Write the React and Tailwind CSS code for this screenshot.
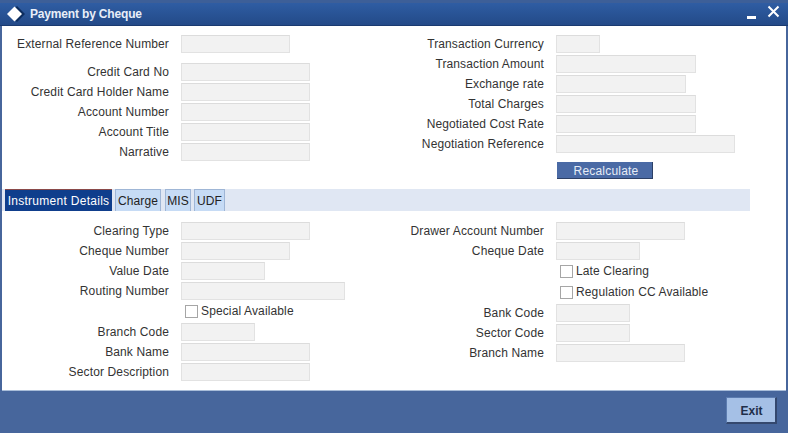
const font = { fontFamily: '"Liberation Sans", Arial, sans-serif' };

function Field({ label, w, className = "" }) {
  return (
    <div className={`flex items-center h-5 ${className}`}>
      <label className="w-[167px] text-right text-[12px] tracking-[0.13px] text-[#333333] whitespace-nowrap">{label}</label>
      <div className={`ml-3 h-[18px] bg-[#f2f2f2] border border-[#e2e2e2] border-t-[#dcdcdc] ${w}`} />
    </div>
  );
}

function Check({ label, className = "" }) {
  return (
    <div className={`flex items-center h-5 ${className}`}>
      <div className="w-[13px] h-[13px] bg-white border border-[#a6a6a6]" />
      <span className="ml-[3px] text-[12px] tracking-[0.13px] text-[#333333] whitespace-nowrap">{label}</span>
    </div>
  );
}

function Tab({ label, active, className = "" }) {
  return (
    <div
      className={
        active
          ? `h-[22px] flex items-center justify-center text-[12px] tracking-[0.28px] text-white bg-[#0f3e8c] border-t border-t-[#8a4a4a] ${className}`
          : `h-[22px] flex items-center justify-center text-[12px] tracking-[0.1px] text-[#222222] bg-[#c6dbf5] border border-[#9fb6d6] border-b-0 ${className}`
      }
    >
      {label}
    </div>
  );
}

export default function App() {
  return (
    <div style={font} className="w-[788px] h-[433px] flex flex-col bg-[#47669c] overflow-hidden">
      {/* title bar */}
      <div className="h-[26px] shrink-0 flex items-center border-t-[3px] border-t-[#3d5f98] border-b border-b-[#1a3a70] bg-gradient-to-b from-[#2f5da3] to-[#234a88] pl-[7px] pr-[2px]">
        <svg width="18" height="16" viewBox="0 0 18 16" className="shrink-0">
          <path d="M10 0 L18 8 L10 16 L2 8 Z" fill="#0d2d5e" />
          <path d="M7.5 0.5 L15 8 L7.5 15.5 L0 8 Z" fill="#ffffff" />
        </svg>
        <span className="ml-[5px] text-[12px] font-bold tracking-[-0.17px] text-[#e8eef8]">Payment by Cheque</span>
        <div className="ml-auto flex items-center mr-[6px]">
          <div className="w-[9px] h-[3px] bg-white mt-[6px]" />
          <svg width="13" height="13" viewBox="0 0 13 13" className="ml-[11px] mb-[6px]">
            <path d="M1.5 1.5 L11.5 11.5 M11.5 1.5 L1.5 11.5" stroke="#ffffff" strokeWidth="2" />
          </svg>
        </div>
      </div>

      {/* body */}
      <div className="ml-[2px] mr-[2px] h-[365px] shrink-0 bg-white border-b border-b-[#a9bdd9]">
        <div className="flex pt-2 h-[163px]">
          <div className="w-[375px]">
            <Field label="External Reference Number" w="w-[109px]" />
            <Field label="Credit Card No" w="w-[129px]" className="mt-2" />
            <Field label="Credit Card Holder Name" w="w-[129px]" />
            <Field label="Account Number" w="w-[129px]" />
            <Field label="Account Title" w="w-[129px]" />
            <Field label="Narrative" w="w-[129px]" />
          </div>
          <div>
            <Field label="Transaction Currency" w="w-[44px]" />
            <Field label="Transaction Amount" w="w-[140px]" />
            <Field label="Exchange rate" w="w-[130px]" />
            <Field label="Total Charges" w="w-[140px]" />
            <Field label="Negotiated Cost Rate" w="w-[140px]" />
            <Field label="Negotiation Reference" w="w-[179px]" />
            <button className="block ml-[180px] mt-[8px] w-[96px] h-[17px] pt-[2px] pl-[3px] text-[12px] leading-[15px] tracking-[0.2px] text-[#e6ecf6] bg-[#4a6aa5] border-b border-r border-[#2c4066]">
              Recalculate
            </button>
          </div>
        </div>

        {/* tabs */}
        <div className="w-[748px] h-[22px] bg-[#e0e7f3] flex pl-[3px]">
          <Tab label="Instrument Details" active className="w-[107px]" />
          <Tab label="Charge" className="w-[46px] ml-[3px]" />
          <Tab label="MIS" className="w-[26px] ml-[4px]" />
          <Tab label="UDF" className="w-[31px] ml-[3px]" />
        </div>

        <div className="flex pt-[10px]">
          <div className="w-[375px]">
            <Field label="Clearing Type" w="w-[129px]" />
            <Field label="Cheque Number" w="w-[109px]" />
            <Field label="Value Date" w="w-[84px]" />
            <Field label="Routing Number" w="w-[164px]" />
            <Check label="Special Available" className="ml-[183px]" />
            <Field label="Branch Code" w="w-[74px]" className="mt-px" />
            <Field label="Bank Name" w="w-[129px]" />
            <Field label="Sector Description" w="w-[129px]" />
          </div>
          <div>
            <Field label="Drawer Account Number" w="w-[129px]" />
            <Field label="Cheque Date" w="w-[84px]" />
            <Check label="Late Clearing" className="ml-[183px]" />
            <Check label="Regulation CC Available" className="ml-[183px] mt-px" />
            <Field label="Bank Code" w="w-[74px]" className="mt-px" />
            <Field label="Sector Code" w="w-[74px]" />
            <Field label="Branch Name" w="w-[129px]" />
          </div>
        </div>
      </div>

      {/* footer */}
      <div className="flex-1 flex items-start justify-end pt-[6px] pr-[11px]">
        <button className="w-[51px] h-[27px] pt-px pl-px bg-[#a5c0e6] border-b-2 border-r-2 border-[#34486e] border-t border-l border-t-[#5c7cb0] border-l-[#5c7cb0] text-[12px] font-bold text-[#1f2f4a]">
          Exit
        </button>
      </div>
    </div>
  );
}
